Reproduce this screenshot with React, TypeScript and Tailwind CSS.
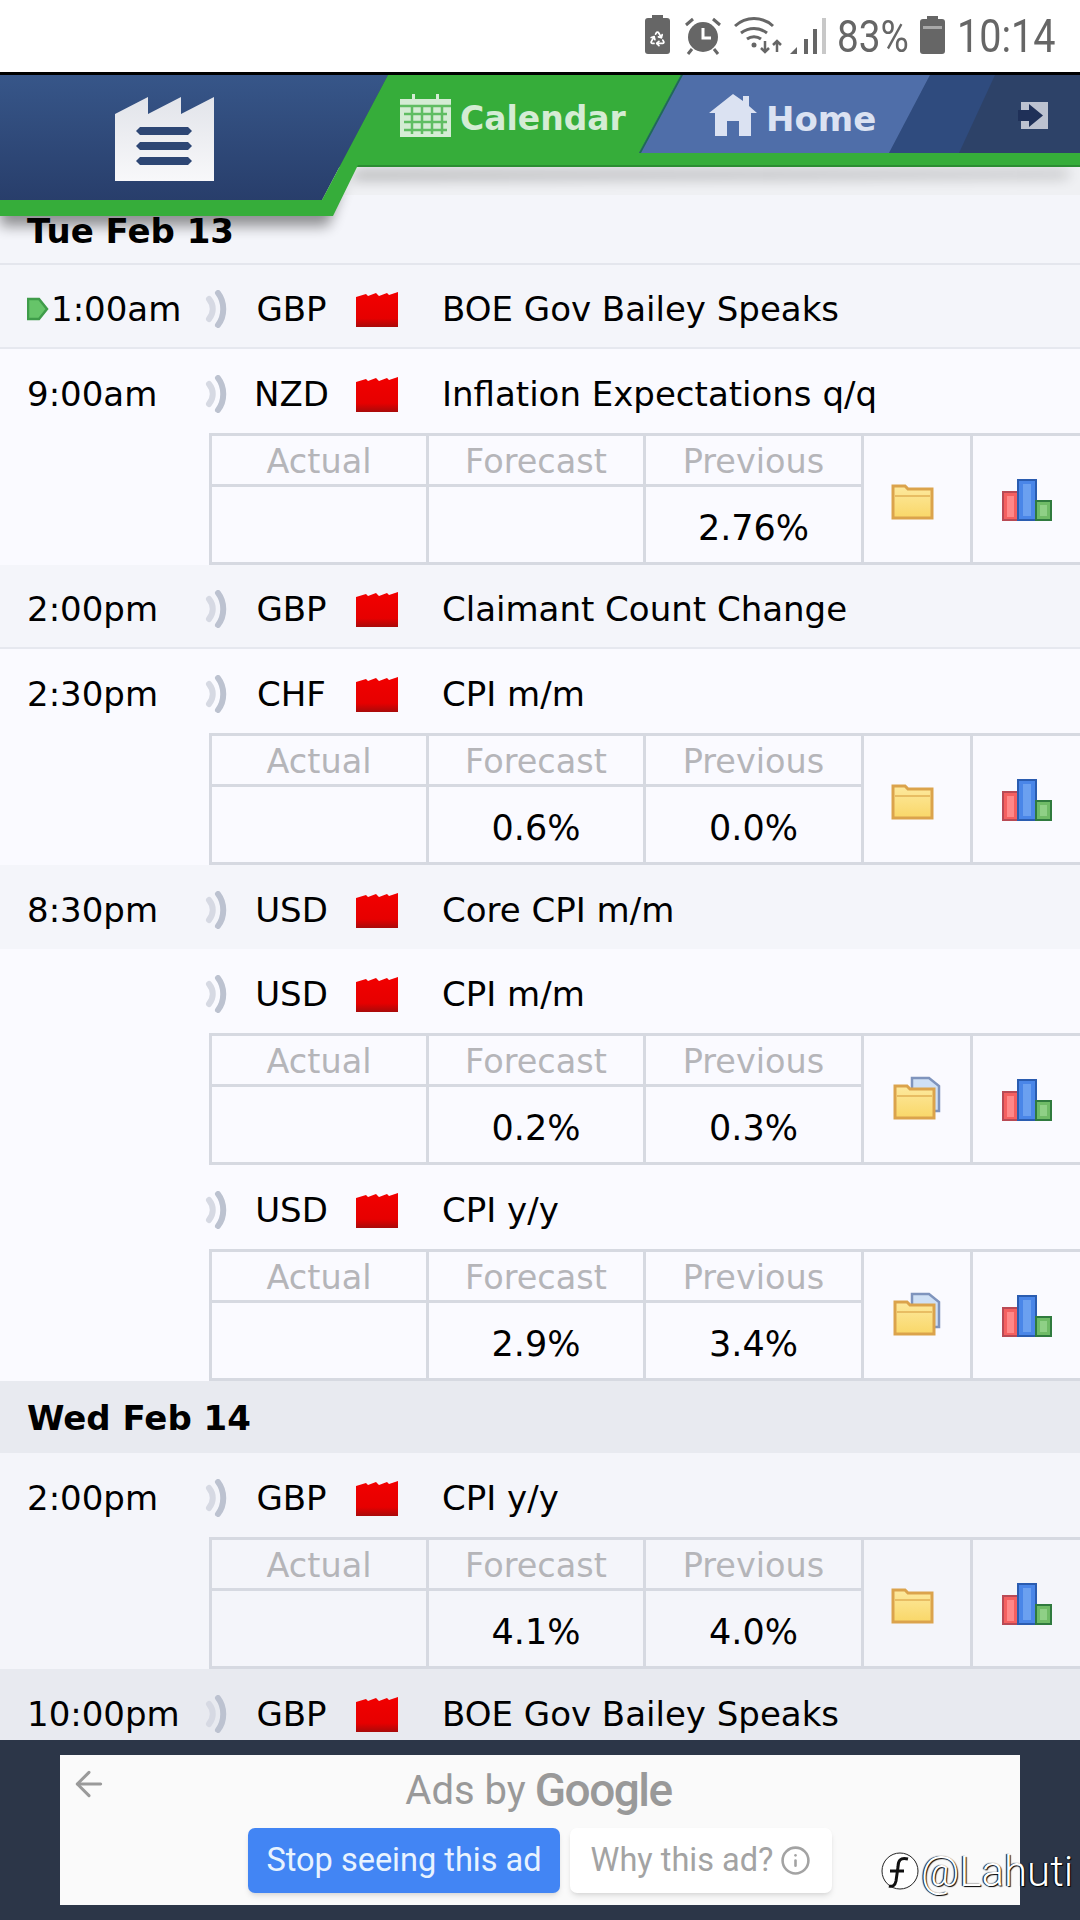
import { ArrowLeft, Info, Recycle } from "lucide-react";

type Ev = {
  time?: string;
  cur: string;
  title: string;
  bg: string;
  line?: boolean;
  marker?: boolean;
  values?: [string, string, string];
  doc?: boolean;
};

const events: (Ev | { day: string })[] = [
  { time: "1:00am", marker: true, cur: "GBP", title: "BOE Gov Bailey Speaks", bg: "bg-[#f4f5fa]", line: true },
  { time: "9:00am", cur: "NZD", title: "Inflation Expectations q/q", bg: "bg-[#fafaff]", values: ["", "", "2.76%"] },
  { time: "2:00pm", cur: "GBP", title: "Claimant Count Change", bg: "bg-[#f4f5fa]", line: true },
  { time: "2:30pm", cur: "CHF", title: "CPI m/m", bg: "bg-[#fafaff]", values: ["", "0.6%", "0.0%"] },
  { time: "8:30pm", cur: "USD", title: "Core CPI m/m", bg: "bg-[#f4f5fa]" },
  { cur: "USD", title: "CPI m/m", bg: "bg-[#fafaff]", values: ["", "0.2%", "0.3%"], doc: true },
  { cur: "USD", title: "CPI y/y", bg: "bg-[#fafaff]", values: ["", "2.9%", "3.4%"], doc: true },
  { day: "Wed Feb 14" },
  { time: "2:00pm", cur: "GBP", title: "CPI y/y", bg: "bg-[#f4f5fa]", values: ["", "4.1%", "4.0%"] },
  { time: "10:00pm", cur: "GBP", title: "BOE Gov Bailey Speaks", bg: "bg-[#e8eaf0]" },
];

function SoundIcon() {
  return (
    <svg width="24" height="38" viewBox="0 0 24 38" fill="none" className="blur-[0.7px]">
      <path d="M4 9c5 6 5 14 0 20" stroke="#d6d9e3" strokeWidth="6" strokeLinecap="round" />
      <path d="M13 3c7 9 7 23 0 32" stroke="#bcc2d0" strokeWidth="6" strokeLinecap="round" />
    </svg>
  );
}

function FlagIcon() {
  return (
    <svg width="42" height="36" viewBox="0 0 42 36">
      <defs>
        <linearGradient id="flagRed" x1="0" y1="0" x2="0" y2="1">
          <stop offset="0" stopColor="#f20000" />
          <stop offset="0.75" stopColor="#e60000" />
          <stop offset="1" stopColor="#a80a0a" />
        </linearGradient>
      </defs>
      <path d="M0 6L10 3L12 5L20 2L23 5L31 2L33 4L42 1V36H0Z" fill="url(#flagRed)" />
    </svg>
  );
}

function FolderIcon({ doc }: { doc?: boolean }) {
  return (
    <svg width="50" height="44" viewBox="0 0 50 44" className={doc ? "-mt-[2px]" : "-mt-[2px] -ml-[4px] blur-[0.4px]"}>
      <defs>
        <linearGradient id="folderFill" x1="0" y1="0" x2="0" y2="1">
          <stop offset="0" stopColor="#fde99f" />
          <stop offset="1" stopColor="#f9d768" />
        </linearGradient>
      </defs>
      {doc && <path d="M20 2h17l10 8v25H20Z" fill="#cfe0f5" stroke="#7f94bd" strokeWidth="2.5" />}
      <path d="M3 10h12l3 3h24v29H3Z" fill="url(#folderFill)" stroke="#dba34c" strokeWidth="3" />
      <path d="M5 20h35" stroke="#e8bd63" strokeWidth="2" />
    </svg>
  );
}

function ChartIcon() {
  return (
    <svg width="50" height="42" viewBox="0 0 50 42" className="blur-[0.3px]">
      <rect x="1" y="13" width="15" height="28" fill="#f46060" stroke="#b94a55" strokeWidth="2" />
      <rect x="5" y="17" width="7" height="21" fill="#f88" />
      <rect x="16" y="1" width="18" height="40" fill="#4a86e8" stroke="#2a5cb0" strokeWidth="2" />
      <rect x="21" y="5" width="8" height="32" fill="#6ba0f0" />
      <rect x="34" y="22" width="15" height="19" fill="#6fbb66" stroke="#2f7a3e" strokeWidth="2" />
      <rect x="38" y="26" width="7" height="11" fill="#8fd086" />
    </svg>
  );
}

function DataTable({ values, doc }: { values: [string, string, string]; doc?: boolean }) {
  const labels = ["Actual", "Forecast", "Previous"];
  return (
    <div className="ml-[209px] grid h-[132px] grid-cols-[217px_217px_218px_109px_1fr] grid-rows-[51px_1fr] border-y-[3px] border-l-[3px] border-[#d6d9e1]">
      {labels.map((l) => (
        <div key={l} className="flex items-center justify-center border-r-[3px] border-b-[3px] border-[#d6d9e1] pt-[4px] text-[33.5px] text-[#b5b5b9]">
          {l}
        </div>
      ))}
      <div className="row-span-2 flex items-center justify-center border-r-[3px] border-[#d6d9e1]">
        <FolderIcon doc={doc} />
      </div>
      <div className="row-span-2 flex items-center justify-center pt-[1px]">
        <ChartIcon />
      </div>
      {values.map((v, i) => (
        <div key={i} className="flex items-center justify-center border-r-[3px] border-[#d6d9e1] pt-[8px] text-[35px] text-black">
          {v}
        </div>
      ))}
    </div>
  );
}

function EventRow({ ev }: { ev: Ev }) {
  return (
    <div className={ev.bg}>
      <div className={`flex h-[84px] items-center pt-[6px] ${ev.line ? "border-b-2 border-[#e6e8ef]" : ""}`}>
        <div className="flex w-[205px] items-center pl-[27px]">
          {ev.marker && (
            <svg width="25" height="24" viewBox="0 0 25 24" className="-mr-[1px] shrink-0">
              <path d="M1 2h11l8 10-8 10H1Z" fill="#66c469" stroke="#3f9c4a" strokeWidth="2.5" />
            </svg>
          )}
          {ev.time}
        </div>
        <SoundIcon />
        <div className="w-[125px] text-center">{ev.cur}</div>
        <div className="ml-[2px] flex">
          <FlagIcon />
        </div>
        <div className="pl-[44px] whitespace-nowrap">{ev.title}</div>
      </div>
      {ev.values && <DataTable values={ev.values} doc={ev.doc} />}
    </div>
  );
}

function StatusBar() {
  return (
    <div className="flex h-[72px] items-center justify-end bg-white pr-[26px] text-[#666666] [font-family:Roboto,sans-serif]">
      <div className="relative mr-[14px] h-[36px] w-[25px] rounded-[3px] bg-[#666666]">
        <div className="absolute -top-[3px] left-[7px] h-[4px] w-[11px] bg-[#666666]" />
        <Recycle size={17} color="#fff" strokeWidth={2.5} className="absolute top-[12px] left-[4px]" />
      </div>
      <svg width="38" height="38" viewBox="0 0 38 38" className="mr-[12px]">
        <circle cx="19" cy="20" r="15" fill="#666" />
        <path d="M19 11v10h8" stroke="#fff" strokeWidth="3" fill="none" />
        <path d="M2 8l7-6M36 8l-7-6M8 32l-4 5M30 32l4 5" stroke="#666" strokeWidth="3" />
      </svg>
      <svg width="54" height="38" viewBox="0 0 54 38" fill="none" className="mr-[2px]" stroke="#666" strokeWidth="3">
        <path d="M1 9c11-10 27-10 38 0" />
        <path d="M7 16c8-6 18-6 26 0" />
        <path d="M13 22c4-3 10-3 14 0" />
        <circle cx="20" cy="28" r="2.5" fill="#666" stroke="none" />
        <path d="M31 24v11m-4-4 4 4 4-4M43 35V24m-4 4 4-4 4 4" strokeWidth="2.5" />
      </svg>
      <svg width="36" height="38" viewBox="0 0 36 38" className="mr-[11px]">
        <path d="M0 37l7-7v7Z" fill="#666" />
        <rect x="14" y="22" width="4" height="15" fill="#666" />
        <rect x="23" y="12" width="4" height="25" fill="#666" />
        <rect x="32" y="1" width="4" height="36" fill="#c8c8c8" />
      </svg>
      <div className="mr-[13px] w-[70px] origin-left scale-x-[0.88] pt-[2px] text-[44px] leading-none whitespace-nowrap">83%</div>
      <div className="relative mr-[12px] h-[35px] w-[25px] rounded-[3px] bg-[#666666]">
        <div className="absolute -top-[3px] left-[7px] h-[4px] w-[11px] bg-[#666666]" />
        <div className="absolute top-[7px] left-[3px] h-[3px] w-[19px] bg-[#a8a8a8]" />
      </div>
      <div className="w-[97px] origin-left scale-x-[0.86] text-[46px] leading-none whitespace-nowrap">10:14</div>
    </div>
  );
}

function Header() {
  return (
    <div className="relative z-10 h-[95px] border-t-[3px] border-black">
      {/* svg is drawn in page coords, shifted up by the 75px of status bar */}
      <svg width="1080" height="170" viewBox="0 75 1080 170" className="absolute top-0 left-0">
        <defs>
          <linearGradient id="navBlue" x1="0" y1="0" x2="0" y2="1">
            <stop offset="0" stopColor="#375689" />
            <stop offset="1" stopColor="#283e6b" />
          </linearGradient>
          <filter id="navShadow" x="-5%" y="-20%" width="110%" height="150%">
            <feGaussianBlur stdDeviation="7" />
          </filter>
        </defs>
        <path d="M0 200H322L356 172H1068V176L345 178L328 226H0Z" fill="#000" opacity="0.42" filter="url(#navShadow)" />
        <rect x="0" y="75" width="1080" height="92" fill="#2d4268" />
        <path d="M0 75H388L322 200H0Z" fill="url(#navBlue)" />
        <path d="M930 75H995L959 153H889Z" fill="#2f4b7e" />
        <path d="M681 75H930L889 153H639Z" fill="#4f6ea9" />
        <path d="M388 75H681L639 153H1080V167H357L333 216H0V200H322Z" fill="#36ad3a" />
        <path d="M1080 165H358L357 167H1080Z" fill="#2b8d32" />
        <path d="M681 75L639 153H641L683 75Z" fill="#1f6a57" />
      </svg>
      <div className="relative flex h-[89px]">
        <div className="flex w-[388px] items-start pt-[22px] pl-[115px]">
          <svg width="99" height="84" viewBox="0 0 99 84">
            <defs>
              <linearGradient id="factoryFill" x1="0" y1="0" x2="0" y2="1">
                <stop offset="0" stopColor="#e2e4ea" />
                <stop offset="1" stopColor="#f8f8fa" />
              </linearGradient>
            </defs>
            <path d="M0 17L33 0V17L66 0V17L99 0V84H0Z" fill="url(#factoryFill)" />
            <path d="M25 30H73L77 34L73 38H25L21 34Z" fill="#2d4674" />
            <path d="M25 45H73L77 49L73 53H25L21 49Z" fill="#2d4674" />
            <path d="M25 60H73L77 64L73 68H25L21 64Z" fill="#2d4674" />
          </svg>
        </div>
        <div className="flex w-[293px] items-start pt-[19px] pl-[12px] text-[33px] leading-[50px] font-bold text-[#d4ecd4] [font-family:'DejaVu_Sans',sans-serif]">
          <svg width="51" height="43" viewBox="0 0 51 43" className="mr-[9px]">
            <path d="M0 5H51V43H0Z" fill="#d4ecd4" />
            <path d="M12 0h3v7h-3ZM36 0h3v7h-3Z" fill="#d4ecd4" />
            <path d="M0 12H51M4 20H47M4 28H47M4 36H47M12 12V40M22 12V40M32 12V40M42 12V40" stroke="#5fbd62" strokeWidth="2.5" />
          </svg>
          Calendar
        </div>
        <div className="flex items-start pt-[19px] pl-[28px] text-[34px] leading-[50px] font-bold text-[#dbe2f2] [font-family:'DejaVu_Sans',sans-serif]">
          <svg width="48" height="42" viewBox="0 0 48 42" className="mr-[9px]">
            <path d="M24 0L34 7V2H40V12L48 19H42V42H30V27H18V42H6V19H0Z" fill="#dbe2f2" />
          </svg>
          Home
        </div>
        <svg width="30" height="27" viewBox="0 0 30 27" className="absolute top-[27px] left-[1018px] blur-[0.5px]">
          <path d="M3 0H30V27H3Z" fill="#bcc2d0" />
          <path d="M0 8H11V2L25 13.5L11 25V19H0Z" fill="#1f3058" />
        </svg>
      </div>
    </div>
  );
}

function AdFooter() {
  return (
    <div className="relative h-[180px] shrink-0 bg-[#2c3648] px-[60px] py-[15px] [font-family:Roboto,sans-serif]">
      <div className="relative flex h-[150px] flex-col items-center bg-[#fafafa]">
        <ArrowLeft size={40} strokeWidth={1.8} color="#9a9a9a" className="absolute top-[9px] left-[9px]" />
        <div className="mt-[8px] -ml-[3px] flex h-[55px] items-center text-[#999999]">
          <span className="text-[40px]">Ads by</span>
          <span className="ml-[9px] text-[46px] font-medium tracking-[-1.5px]">Google</span>
        </div>
        <div className="mt-[10px] flex gap-[10px]">
          <div className="flex h-[65px] w-[312px] items-center justify-center rounded-[7px] bg-[#4285f4] text-[32.5px] text-[#e8f3ff] shadow-md">
            Stop seeing this ad
          </div>
          <div className="flex h-[65px] w-[262px] items-center justify-center gap-[7px] rounded-[7px] bg-white text-[32.5px] text-[#a3a3a3] shadow-md">
            Why this ad?
            <Info size={31} strokeWidth={2} />
          </div>
        </div>
      </div>
      <div className="absolute top-[100px] left-[878px] flex items-center text-[42px] font-light whitespace-nowrap text-white [text-shadow:1px_1px_1px_#000,-1px_0_1px_#000]">
        <svg width="42" height="46" viewBox="0 0 42 46" className="mr-[1px]" fill="none">
          <circle cx="22" cy="22" r="18" fill="#fff" stroke="#222" strokeWidth="1" />
          <path d="M30 10c-8-2-10 2-10 8l-2 14c-1 5-4 6-7 5M12 22h14" stroke="#111" strokeWidth="3" />
        </svg>
        @Lahuti
      </div>
    </div>
  );
}

export default function App() {
  return (
    <div className="flex h-[1920px] w-[1080px] flex-col overflow-hidden bg-[#f4f5fa] text-[34px] text-black [font-family:'DejaVu_Sans',sans-serif]">
      <StatusBar />
      <Header />
      <div className="min-h-0 flex-1 overflow-hidden">
        <div className="h-[28px] bg-[#eff0f3]" />
        <div className="flex h-[70px] items-center border-b-2 border-[#e4e6ed] pt-[5px] pl-[27px] text-[34px] font-bold">Tue Feb 13</div>
        {events.map((e, i) =>
          "day" in e ? (
            <div key={i} className="flex h-[72px] items-center bg-[#e8eaf0] pt-[3px] pl-[27px] text-[34px] font-bold">
              {e.day}
            </div>
          ) : (
            <EventRow key={i} ev={e} />
          )
        )}
      </div>
      <AdFooter />
    </div>
  );
}
